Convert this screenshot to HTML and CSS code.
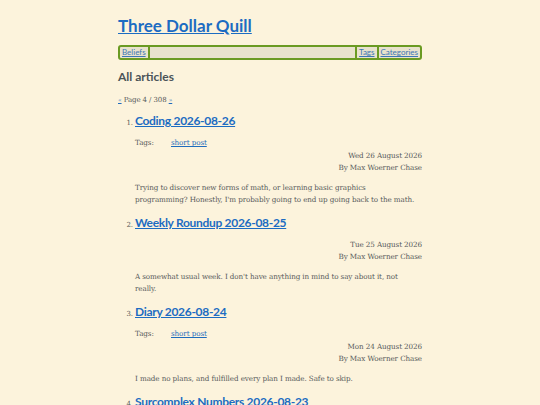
FILE: index.html
```html
<!DOCTYPE html>
<html lang="en">
<head>
<meta charset="utf-8">
<title>Three Dollar Quill</title>
<link rel="stylesheet" href="styles.css">
</head>
<body>
<div class="page">
  <header class="site-header">
    <h1 class="site-title"><a href="#">Three Dollar Quill</a></h1>
    <nav class="nav">
      <a class="nav-link" href="#">Beliefs</a>
      <span class="nav-fill"></span>
      <a class="nav-link sep-left" href="#">Tags</a>
      <a class="nav-link sep-left" href="#">Categories</a>
    </nav>
  </header>
  <main>
    <h2 class="section-title">All articles</h2>
    <p class="pager"><a href="#">«</a> Page 4 / 308 <a href="#">»</a></p>
    <ol class="articles">
      <li class="article">
        <h3 class="article-title"><a href="#">Coding 2026-08-26</a></h3>
        <div class="info">
          <div class="tags"><span class="tags-label">Tags:</span><a href="#">short&nbsp;post</a></div>
          <div class="meta">
            <div>Wed 26 August 2026</div>
            <div>By Max Woerner Chase</div>
          </div>
        </div>
        <p class="summary">Trying to discover new forms of math, or learning basic graphics programming? Honestly, I'm probably going to end up going back to the math.</p>
      </li>
      <li class="article">
        <h3 class="article-title"><a href="#">Weekly Roundup 2026-08-25</a></h3>
        <div class="info">
          <div class="meta">
            <div>Tue 25 August 2026</div>
            <div>By Max Woerner Chase</div>
          </div>
        </div>
        <p class="summary">A somewhat usual week. I don't have anything in mind to say about it, not really.</p>
      </li>
      <li class="article">
        <h3 class="article-title"><a href="#">Diary 2026-08-24</a></h3>
        <div class="info">
          <div class="tags"><span class="tags-label">Tags:</span><a href="#">short&nbsp;post</a></div>
          <div class="meta">
            <div>Mon 24 August 2026</div>
            <div>By Max Woerner Chase</div>
          </div>
        </div>
        <p class="summary">I made no plans, and fulfilled every plan I made. Safe to skip.</p>
      </li>
      <li class="article">
        <h3 class="article-title"><a href="#">Surcomplex Numbers 2026-08-23</a></h3>
        <div class="info">
          <div class="meta">
            <div>Sun 23 August 2026</div>
            <div>By Max Woerner Chase</div>
          </div>
        </div>
      </li>
    </ol>
  </main>
</div>
</body>
</html>
```
FILE: styles.css
```css
html, body {
  margin: 0;
  padding: 0;
  background: #fcf3dc;
}
body {
  color: #56595a;
  font-family: "DejaVu Serif", serif;
  font-size: 7.2px;
  letter-spacing: -0.1px;
  line-height: 12px;
}
a {
  color: #1f6cbd;
}
.page {
  width: 304px;
  margin: 0 auto;
  padding-top: 16px;
}
.site-title {
  margin: 0;
  font-family: "Lato", "Open Sans", sans-serif;
  font-weight: 700;
  font-size: 17px;
  line-height: 20px;
  letter-spacing: 0;
}
.site-title a {
  color: #1c6cc2;
}
.nav {
  display: flex;
  margin-top: 9px;
  height: 11px;
  border: 2px solid #6a9a22;
  border-radius: 3px;
  background: #e8e2cc;
  font-family: "Lato", "Open Sans", sans-serif;
  font-size: 8px;
  line-height: 11px;
  letter-spacing: 0;
}
.nav-link {
  padding: 0 2px;
  color: #3c76b4;
}
.nav-link:first-child {
  border-right: 2px solid #6a9a22;
}
.nav-fill {
  flex: 1;
}
.sep-left {
  border-left: 2px solid #6a9a22;
}
.section-title {
  margin: 9px 0 0;
  font-family: "Lato", "Open Sans", sans-serif;
  font-weight: 700;
  font-size: 12px;
  line-height: 16px;
  letter-spacing: 0;
  color: #4b5458;
}
.pager {
  margin: 9px 0 0;
  font-size: 7px;
}
.pager a {
  font-size: 6px;
}
.articles {
  margin: 5px 0 0;
  padding-left: 17px;
}
.article {
  margin: 0;
}
.article::marker {
  font-size: 7px;
}
.article-title {
  margin: 0;
  font-family: "Lato", "Open Sans", sans-serif;
  font-weight: 700;
  font-size: 12px;
  letter-spacing: -0.3px;
  line-height: 20px;
}
.article-title a {
  color: #1c6cc2;
}
.info {
  margin-top: 6px;
}
.tags {
  display: flex;
}
.tags-label {
  width: 36px;
}
.meta {
  text-align: right;
  margin-top: 1px;
}
.summary {
  max-width: 280px;
  margin: 8px 0 7px;
}
```
